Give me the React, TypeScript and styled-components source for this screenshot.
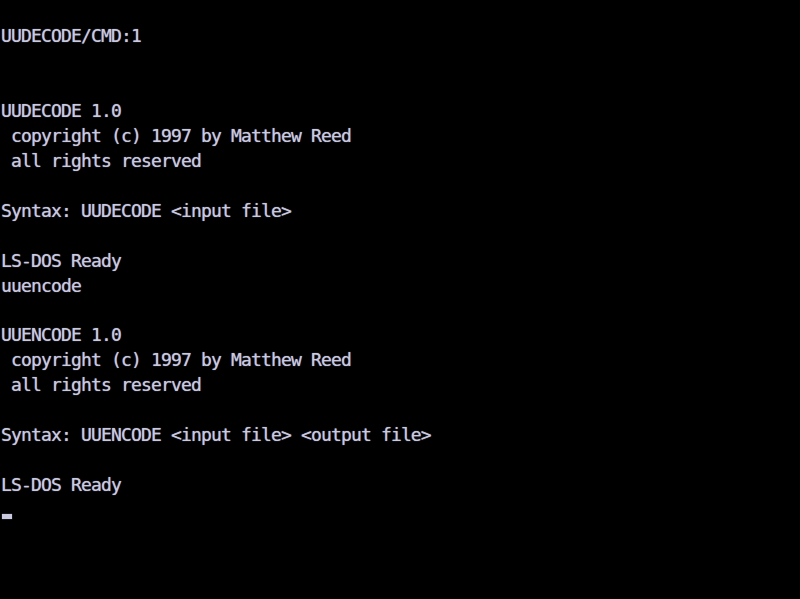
import React from "react";
import styled, { createGlobalStyle } from "styled-components";

const Global = createGlobalStyle`
  html, body { margin: 0; padding: 0; background: #000; }
  #root { width: 800px; height: 599px; overflow: hidden; }
`;

const Screen = styled.div`
  width: 800px;
  height: 599px;
  background: #000;
  display: grid;
  grid-template-rows: repeat(24, 1fr);
  padding-left: 1px;
  box-sizing: border-box;
  overflow: hidden;
`;

const Row = styled.div`
  font-family: "DejaVu Sans Mono", "Liberation Mono", monospace;
  font-size: 18px;
  letter-spacing: -0.84px;
  line-height: 21px;
  color: #c9c9e0;
  white-space: pre;
  text-shadow: 0 0 1px rgba(201, 201, 224, 0.8);
  align-self: start;
`;

const Cursor = styled.span`
  display: block;
  width: 10px;
  height: 5px;
  margin-top: 15px;
  margin-left: 1px;
  background: #c9c9e0;
  box-shadow: 0 0 1px rgba(201, 201, 224, 0.6);
`;

const lines: string[] = [
  "",
  "UUDECODE/CMD:1",
  "",
  "",
  "UUDECODE 1.0",
  " copyright (c) 1997 by Matthew Reed",
  " all rights reserved",
  "",
  "Syntax: UUDECODE <input file>",
  "",
  "LS-DOS Ready",
  "uuencode",
  "",
  "UUENCODE 1.0",
  " copyright (c) 1997 by Matthew Reed",
  " all rights reserved",
  "",
  "Syntax: UUENCODE <input file> <output file>",
  "",
  "LS-DOS Ready",
];

export default function App() {
  return (
    <>
      <Global />
      <Screen>
        {lines.map((l, i) => (
          <Row key={i}>{l}</Row>
        ))}
        <Row>
          <Cursor />
        </Row>
      </Screen>
    </>
  );
}
